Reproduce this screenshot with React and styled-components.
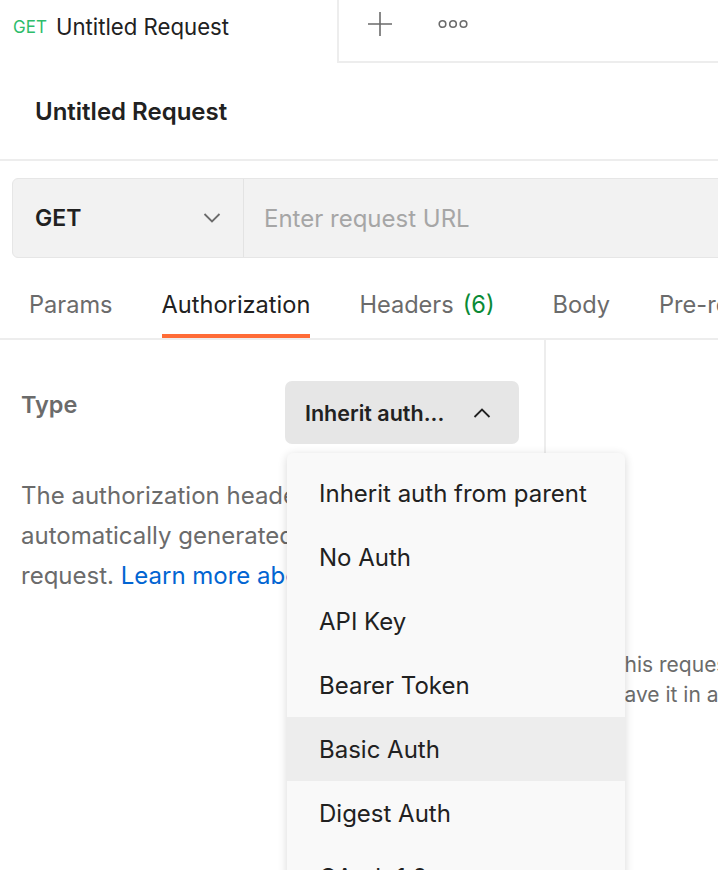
import styled, { createGlobalStyle } from 'styled-components'

const GlobalStyle = createGlobalStyle`
  html, body {
    margin: 0;
    padding: 0;
    background: #ffffff;
    overflow: hidden;
  }
  body {
    font-family: Inter, "Noto Sans", sans-serif;
    color: #212121;
    -webkit-font-smoothing: antialiased;
  }
  * {
    box-sizing: border-box;
  }
`

const authTypes = [
  'Inherit auth from parent',
  'No Auth',
  'API Key',
  'Bearer Token',
  'Basic Auth',
  'Digest Auth',
  'OAuth 1.0',
  'OAuth 2.0',
]

const requestTabs = [
  { label: 'Params' },
  { label: 'Authorization', active: true },
  { label: 'Headers', count: 6 },
  { label: 'Body' },
  { label: 'Pre-request Script' },
]

const PlusIcon = () => (
  <svg width="26" height="26" viewBox="0 0 26 26" fill="none">
    <path d="M13 1v24M1 13h24" stroke="#6b6b6b" strokeWidth="1.6" />
  </svg>
)

const DotsIcon = () => (
  <svg width="30" height="10" viewBox="0 0 30 10" fill="none">
    <circle cx="4.5" cy="5" r="3.3" stroke="#6b6b6b" strokeWidth="1.6" />
    <circle cx="15" cy="5" r="3.3" stroke="#6b6b6b" strokeWidth="1.6" />
    <circle cx="25.5" cy="5" r="3.3" stroke="#6b6b6b" strokeWidth="1.6" />
  </svg>
)

const Chevron = ({ up, color }) => (
  <svg width="18" height="10" viewBox="0 0 18 10" fill="none">
    <path
      d={up ? 'M1.5 9L9 1.5L16.5 9' : 'M1.5 1L9 8.5L16.5 1'}
      stroke={color}
      strokeWidth="1.8"
    />
  </svg>
)

const App = () => (
  <Page>
    <GlobalStyle />
    <TabStrip>
      <OpenTab>
        <Method>GET</Method>
        <TabName>Untitled Request</TabName>
      </OpenTab>
      <TabActions>
        <IconButton>
          <PlusIcon />
        </IconButton>
        <IconButton>
          <DotsIcon />
        </IconButton>
      </TabActions>
    </TabStrip>

    <Header>
      <Title>Untitled Request</Title>
    </Header>

    <UrlRow>
      <UrlBar>
        <MethodSelect>
          <span>GET</span>
          <Chevron color="#6b6b6b" />
        </MethodSelect>
        <UrlInput>Enter request URL</UrlInput>
      </UrlBar>
    </UrlRow>

    <Tabs>
      {requestTabs.map(tab => (
        <Tab key={tab.label} active={tab.active} hasCount={!!tab.count}>
          {tab.label}
          {tab.count && <Count>({tab.count})</Count>}
        </Tab>
      ))}
    </Tabs>

    <Content>
      <LeftPanel>
        <TypeRow>
          <TypeLabel>Type</TypeLabel>
          <SelectWrap>
            <TypeSelect>
              <span>Inherit auth...</span>
              <Chevron up color="#212121" />
            </TypeSelect>
            <Menu>
              {authTypes.map(item => (
                <MenuItem key={item} hovered={item === 'Basic Auth'}>
                  {item}
                </MenuItem>
              ))}
            </Menu>
          </SelectWrap>
        </TypeRow>
        <Description>
          The authorization header will be automatically generated when you
          send the request. <Link>Learn more about authorization</Link>
        </Description>
      </LeftPanel>
      <RightPanel>
        <Empty>
          This request is not inheriting any authorization helper at the
          moment.
          <br />
          Save it in a collection to use the parent's authorization helper.
        </Empty>
      </RightPanel>
    </Content>
  </Page>
)

export default App

const Page = styled.div`
  width: 718px;
  height: 870px;
  overflow: hidden;
`

const TabStrip = styled.div`
  display: flex;
  height: 63px;
`

const OpenTab = styled.div`
  width: 339px;
  display: flex;
  align-items: center;
  gap: 9px;
  padding: 0 0 10px 13px;
  border-right: 2px solid #ededed;
`

const Method = styled.span`
  font-size: 17px;
  color: #2ebd6b;
`

const TabName = styled.span`
  font-size: 22.2px;
  color: #212121;
`

const TabActions = styled.div`
  flex: 1;
  display: flex;
  align-items: flex-start;
  gap: 45px;
  padding: 11px 0 0 28px;
  border-bottom: 2px solid #ededed;
`

const IconButton = styled.div`
  height: 26px;
  display: flex;
  align-items: center;
  justify-content: center;
`

const Header = styled.div`
  height: 98px;
  display: flex;
  align-items: center;
  padding-left: 35px;
  border-bottom: 2px solid #ededed;
`

const Title = styled.h1`
  margin: 0;
  font-size: 24px;
  font-weight: 600;
  color: #212121;
`

const UrlRow = styled.div`
  padding: 17px 0 0 12px;
`

const UrlBar = styled.div`
  width: 740px;
  height: 80px;
  display: flex;
  background: #f2f2f2;
  border: 1.5px solid #e6e6e6;
  border-radius: 6px;
`

const MethodSelect = styled.div`
  width: 231px;
  display: flex;
  align-items: center;
  justify-content: space-between;
  padding: 0 22px 0 22px;
  border-right: 1.5px solid #e3e3e3;
  font-size: 23px;
  font-weight: 600;
  color: #212121;
`

const UrlInput = styled.div`
  flex: 1;
  display: flex;
  align-items: center;
  padding-left: 20px;
  font-size: 24px;
  color: #a6a6a6;
`

const Tabs = styled.div`
  display: flex;
  gap: 49px;
  height: 82px;
  padding: 22px 0 0 29px;
  border-bottom: 2px solid #ededed;
  white-space: nowrap;
`

const Tab = styled.div`
  height: 58px;
  display: flex;
  align-items: center;
  padding-bottom: 6px;
  margin-right: ${p => (p.hasCount ? '9px' : '0')};
  font-size: 23.6px;
  color: ${p => (p.active ? '#212121' : '#6b6b6b')};
  border-bottom: 4px solid ${p => (p.active ? '#ff6c37' : 'transparent')};
`

const Count = styled.span`
  margin-left: 9px;
  color: #0a8a36;
`

const Content = styled.div`
  display: flex;
  height: 540px;
`

const LeftPanel = styled.div`
  width: 546px;
  flex-shrink: 0;
  padding: 41px 25px 0 21px;
  border-right: 2px solid #ededed;
`

const TypeRow = styled.div`
  display: flex;
  justify-content: space-between;
  align-items: flex-start;
`

const TypeLabel = styled.div`
  padding-top: 9px;
  font-size: 23.5px;
  font-weight: 600;
  color: #6b6b6b;
`

const SelectWrap = styled.div`
  position: relative;
`

const TypeSelect = styled.div`
  width: 234px;
  height: 63px;
  display: flex;
  align-items: center;
  justify-content: space-between;
  padding: 0 28px 0 20px;
  background: #e6e6e6;
  border-radius: 7px;
  font-size: 21.5px;
  font-weight: 600;
  color: #212121;
`

const Menu = styled.div`
  position: absolute;
  top: 72px;
  left: 2px;
  width: 338px;
  padding-top: 8px;
  background: #f9f9f9;
  border-radius: 6px;
  box-shadow: 0 2px 10px rgba(0, 0, 0, 0.16);
  z-index: 10;
`

const MenuItem = styled.div`
  height: 64px;
  display: flex;
  align-items: center;
  padding-left: 32px;
  font-size: 24px;
  color: #212121;
  background: ${p => (p.hovered ? '#ededed' : 'transparent')};
`

const Description = styled.p`
  margin: 32px 0 0;
  font-size: 24px;
  line-height: 40px;
  color: #6b6b6b;
`

const Link = styled.span`
  color: #0265d2;
`

const RightPanel = styled.div`
  flex: 1;
  padding: 310px 0 0 65px;
`

const Empty = styled.p`
  margin: 0;
  font-size: 21px;
  line-height: 30px;
  color: #6b6b6b;
  white-space: nowrap;
`
